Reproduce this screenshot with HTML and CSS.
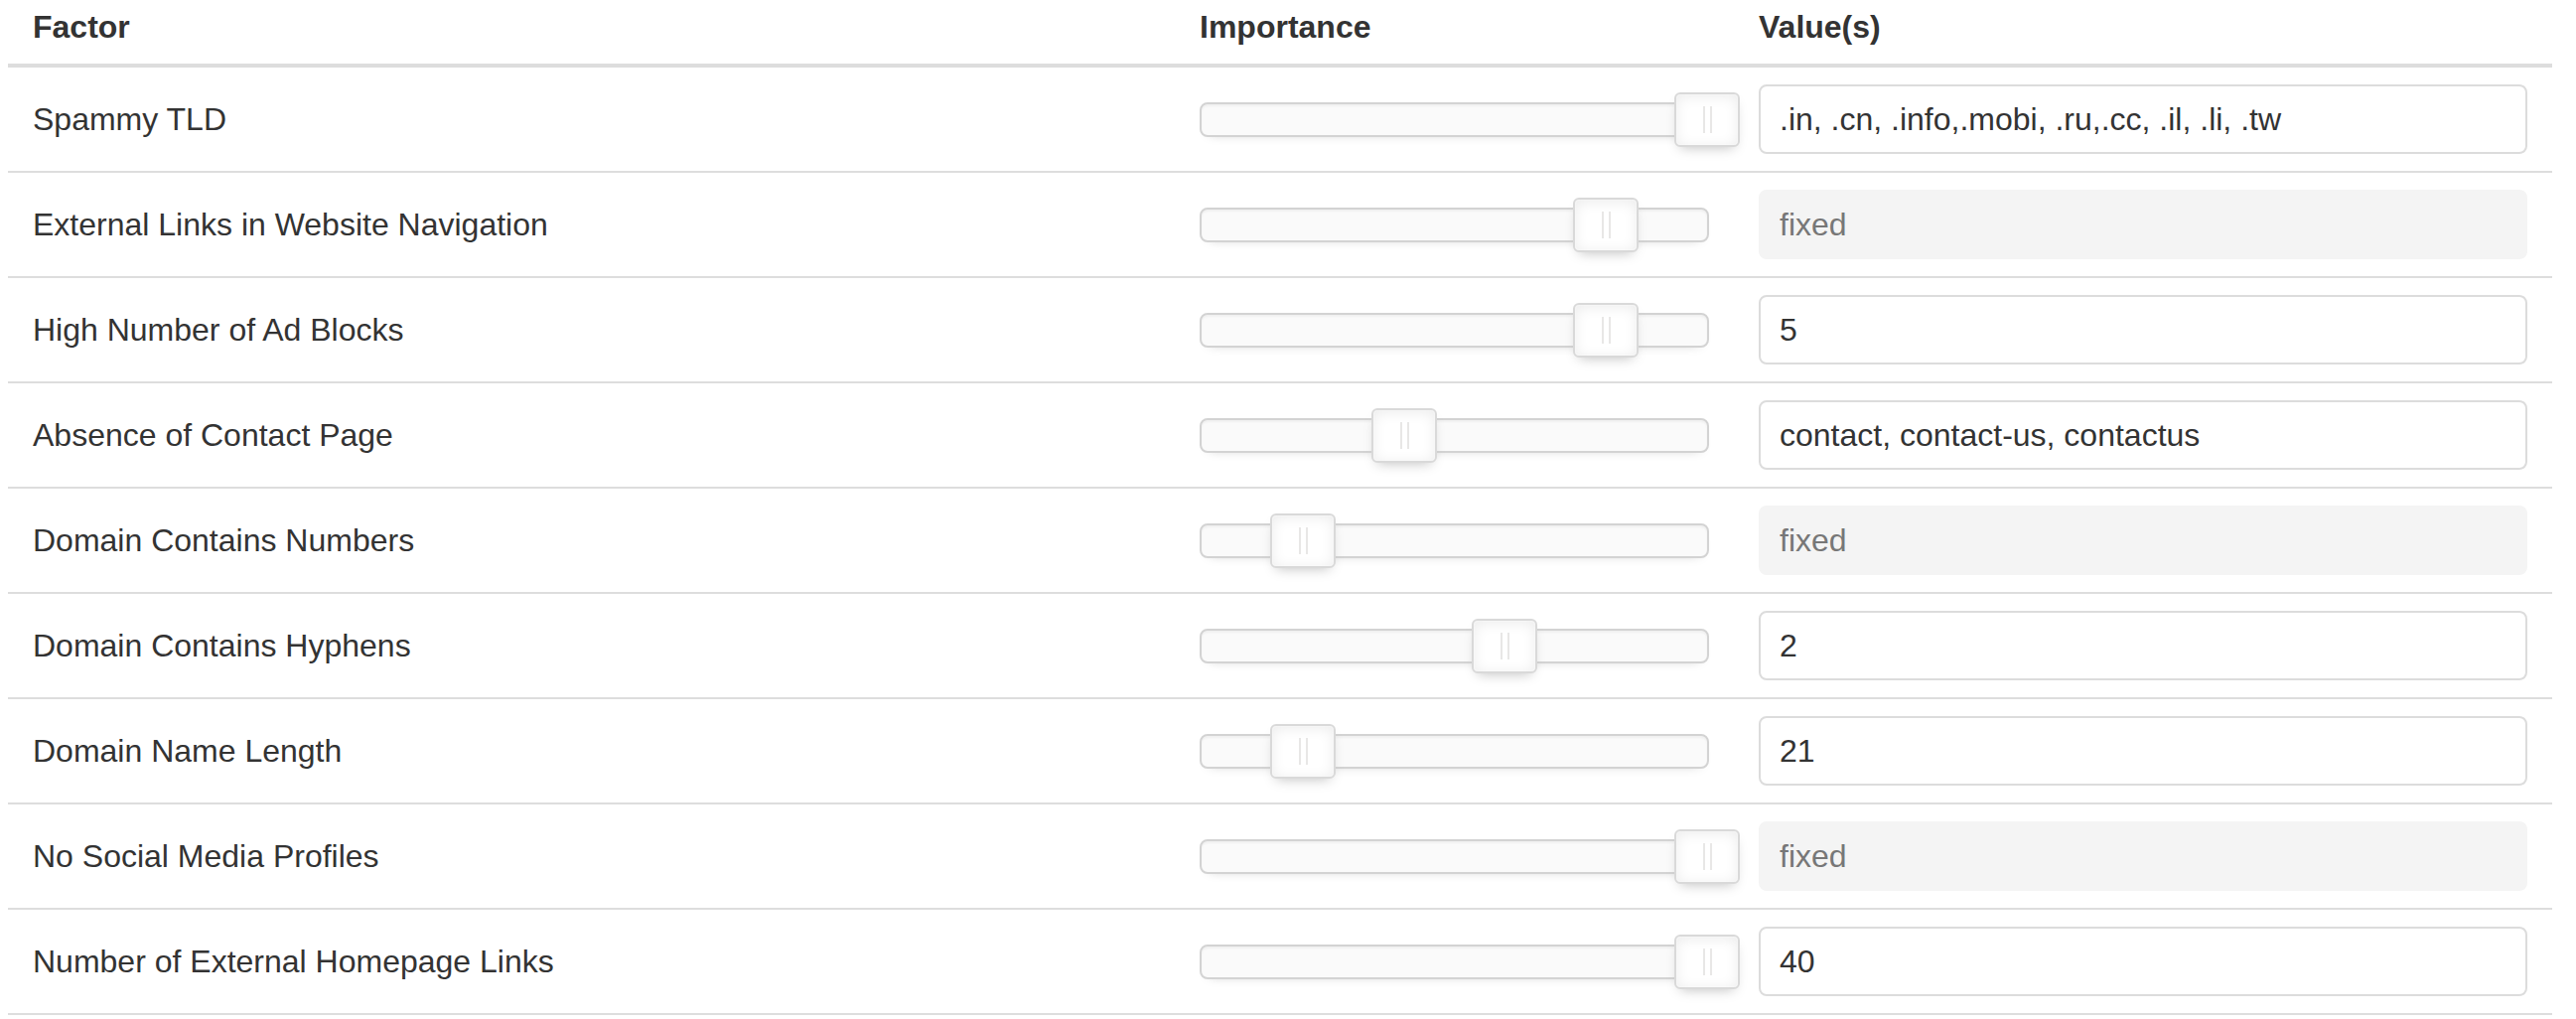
FILE: index.html
```html
<!DOCTYPE html>
<html lang="en">
<head>
<meta charset="utf-8">
<title>Factors</title>
<link rel="stylesheet" href="styles.css">
</head>
<body>
<table class="factors">
  <colgroup>
    <col class="c-factor">
    <col class="c-imp">
    <col class="c-val">
  </colgroup>
  <thead>
    <tr>
      <th class="col-factor">Factor</th>
      <th class="col-imp">Importance</th>
      <th class="col-val">Value(s)</th>
    </tr>
  </thead>
  <tbody>
    <tr>
      <td class="col-factor">Spammy TLD</td>
      <td class="col-imp"><div class="slider"><div class="handle" style="left:100%"></div></div></td>
      <td class="col-val"><input class="field" type="text" value=".in, .cn, .info,.mobi, .ru,.cc, .il, .li, .tw"></td>
    </tr>
    <tr>
      <td class="col-factor">External Links in Website Navigation</td>
      <td class="col-imp"><div class="slider"><div class="handle" style="left:80%"></div></div></td>
      <td class="col-val"><input class="field" type="text" value="fixed" disabled></td>
    </tr>
    <tr>
      <td class="col-factor">High Number of Ad Blocks</td>
      <td class="col-imp"><div class="slider"><div class="handle" style="left:80%"></div></div></td>
      <td class="col-val"><input class="field" type="text" value="5"></td>
    </tr>
    <tr>
      <td class="col-factor">Absence of Contact Page</td>
      <td class="col-imp"><div class="slider"><div class="handle" style="left:40%"></div></div></td>
      <td class="col-val"><input class="field" type="text" value="contact, contact-us, contactus"></td>
    </tr>
    <tr>
      <td class="col-factor">Domain Contains Numbers</td>
      <td class="col-imp"><div class="slider"><div class="handle" style="left:20%"></div></div></td>
      <td class="col-val"><input class="field" type="text" value="fixed" disabled></td>
    </tr>
    <tr>
      <td class="col-factor">Domain Contains Hyphens</td>
      <td class="col-imp"><div class="slider"><div class="handle" style="left:60%"></div></div></td>
      <td class="col-val"><input class="field" type="text" value="2"></td>
    </tr>
    <tr>
      <td class="col-factor">Domain Name Length</td>
      <td class="col-imp"><div class="slider"><div class="handle" style="left:20%"></div></div></td>
      <td class="col-val"><input class="field" type="text" value="21"></td>
    </tr>
    <tr>
      <td class="col-factor">No Social Media Profiles</td>
      <td class="col-imp"><div class="slider"><div class="handle" style="left:100%"></div></div></td>
      <td class="col-val"><input class="field" type="text" value="fixed" disabled></td>
    </tr>
    <tr>
      <td class="col-factor">Number of External Homepage Links</td>
      <td class="col-imp"><div class="slider"><div class="handle" style="left:100%"></div></div></td>
      <td class="col-val"><input class="field" type="text" value="40"></td>
    </tr>
  </tbody>
</table>
</body>
</html>
```

FILE: styles.css
```css
html, body {
  margin: 0;
  padding: 0;
  background: #ffffff;
}

body {
  font-family: "Liberation Sans", Arial, sans-serif;
  font-size: 32px;
  color: #333333;
}

.factors {
  margin-left: 8px;
  width: 2562px;
  border-collapse: collapse;
  table-layout: fixed;
}

.c-factor { width: 1176px; }
.c-imp { width: 563px; }
.c-val { width: 823px; }

.factors th {
  height: 53px;
  padding: 0 24px 11px 24px;
  text-align: left;
  font-weight: 700;
  font-size: 32px;
  line-height: 40px;
  color: #333333;
  vertical-align: middle;
  border-bottom: 4px solid #dddddd;
}

.factors td {
  height: 104px;
  padding: 0 24px;
  vertical-align: middle;
  border-bottom: 2px solid #dddddd;
}

.factors .col-factor { padding-left: 25px; }
.factors .col-val { padding-right: 25px; }

.slider {
  position: relative;
  width: 513px;
  height: 35px;
  box-sizing: border-box;
  background: #fafafa;
  border: 2px solid #d3d3d3;
  border-radius: 8px;
  box-shadow: inset 0 2px 2px #f0f0f0, 0 6px 12px -10px #bbbbbb;
}

.handle {
  position: absolute;
  top: -12px;
  width: 66px;
  height: 55px;
  margin-left: -33px;
  box-sizing: border-box;
  background: #ffffff;
  border: 2px solid #d9d9d9;
  border-radius: 6px;
  box-shadow: inset 0 0 2px #ffffff, inset 0 2px 14px #ebebeb, 0 6px 12px -6px #bbbbbb;
}

.handle::before,
.handle::after {
  content: "";
  position: absolute;
  top: 12px;
  width: 2px;
  height: 27px;
  background: #e8e7e6;
}

.handle::before { left: 27px; }
.handle::after { left: 34px; }

.field {
  display: block;
  width: 100%;
  height: 70px;
  box-sizing: border-box;
  margin: 0;
  padding: 0 19px;
  font-family: "Liberation Sans", Arial, sans-serif;
  font-size: 32px;
  color: #333333;
  background: #ffffff;
  border: 2px solid #dcdcdc;
  border-radius: 8px;
  outline: none;
}

.field:disabled {
  background: #f4f4f4;
  border-color: #f4f4f4;
  color: #777777;
}
```
